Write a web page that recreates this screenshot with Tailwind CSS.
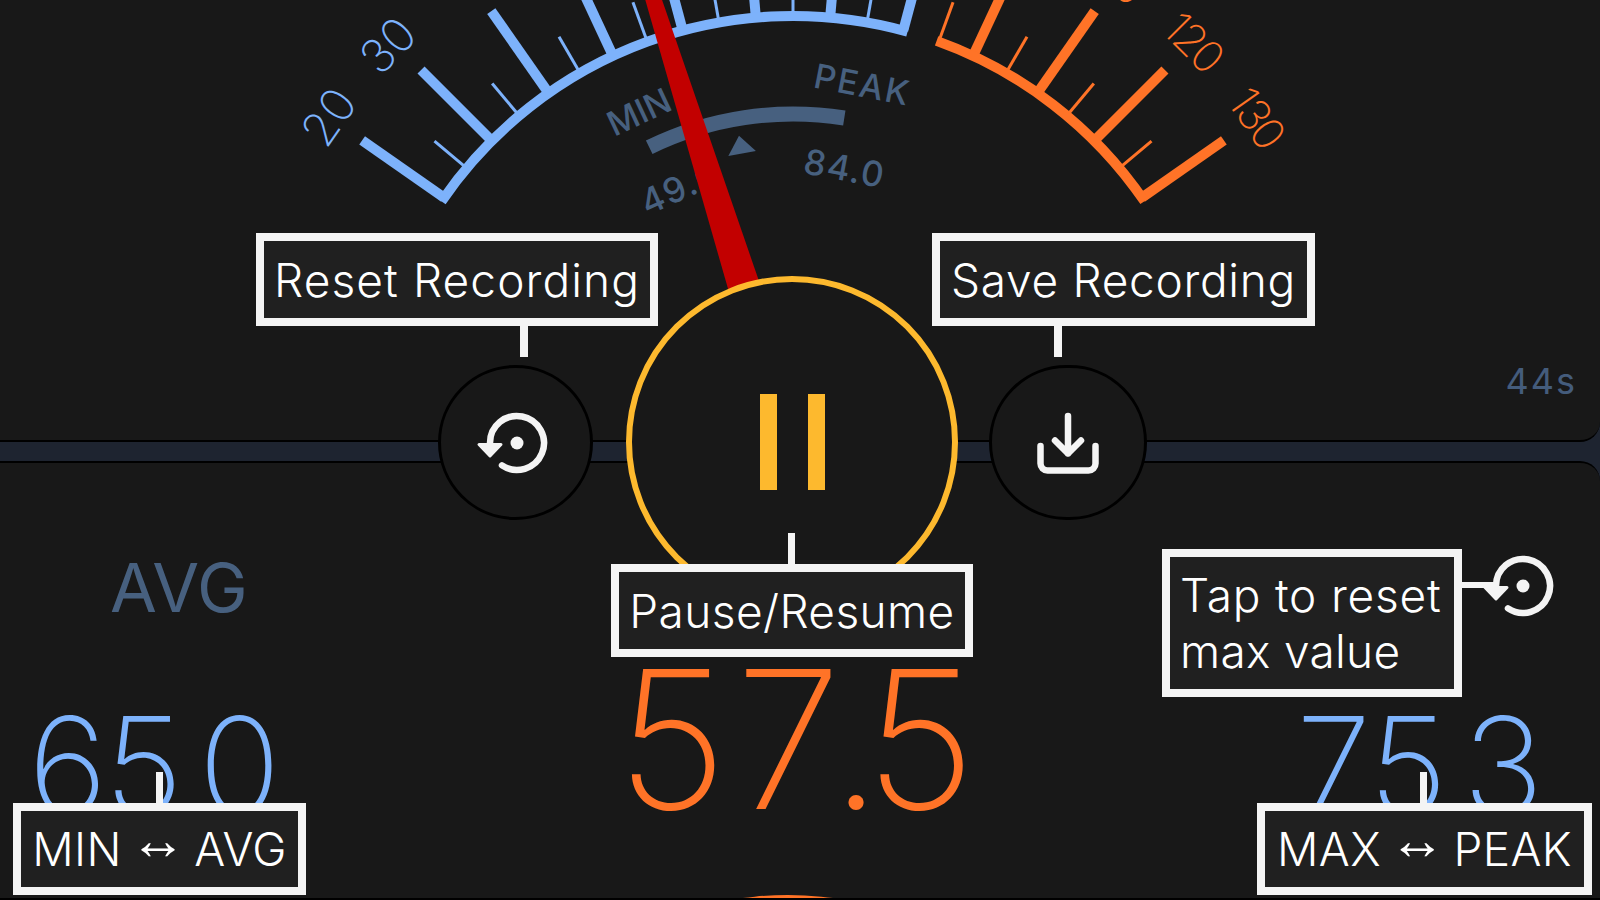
<!DOCTYPE html>
<html>
<head>
<meta charset="utf-8">
<script src="https://cdn.jsdelivr.net/npm/@tailwindcss/browser@4"></script>
</head>
<body class="bg-[#1e2430]">
<div class="relative w-[1600px] h-[900px] overflow-hidden flex flex-col bg-[#1e2430] [font-family:Inter,sans-serif]">

  <!-- upper panel: gauge -->
  <section class="relative h-[442px] shrink-0 bg-[#181818] border-b-2 border-black rounded-br-[20px]">
    <svg class="block overflow-hidden" width="1600" height="440" viewBox="0 0 1600 440" fill="none">
      <!-- blue ticks -->
      <g stroke="#7db2fb" stroke-width="10">
        <line x1="793" y1="16" x2="793" y2="-84" transform="rotate(-55 793 442)"/>
        <line x1="793" y1="16" x2="793" y2="-84" transform="rotate(-45 793 442)"/>
        <line x1="793" y1="16" x2="793" y2="-84" transform="rotate(-35 793 442)"/>
        <line x1="793" y1="16" x2="793" y2="-84" transform="rotate(-25 793 442)"/>
        <line x1="793" y1="16" x2="793" y2="-84" transform="rotate(-15 793 442)"/>
        <line x1="793" y1="16" x2="793" y2="-84" transform="rotate(-5 793 442)"/>
        <line x1="793" y1="16" x2="793" y2="-84" transform="rotate(5 793 442)"/>
        <line x1="793" y1="16" x2="793" y2="-84" transform="rotate(15 793 442)"/>
      </g>
      <g stroke="#7db2fb" stroke-width="3">
        <line x1="793" y1="16" x2="793" y2="-26" transform="rotate(-50 793 442)"/>
        <line x1="793" y1="16" x2="793" y2="-26" transform="rotate(-40 793 442)"/>
        <line x1="793" y1="16" x2="793" y2="-26" transform="rotate(-30 793 442)"/>
        <line x1="793" y1="16" x2="793" y2="-26" transform="rotate(-20 793 442)"/>
        <line x1="793" y1="16" x2="793" y2="-26" transform="rotate(-10 793 442)"/>
        <line x1="793" y1="16" x2="793" y2="-26" transform="rotate(0 793 442)"/>
        <line x1="793" y1="16" x2="793" y2="-26" transform="rotate(10 793 442)"/>
      </g>
      <path d="M441.5 201.3 A426 426 0 0 1 907.6 31.7" stroke="#7db2fb" stroke-width="10"/>
      <!-- orange ticks -->
      <g stroke="#ff7327" stroke-width="10">
        <line x1="793" y1="16" x2="793" y2="-84" transform="rotate(25 793 442)"/>
        <line x1="793" y1="16" x2="793" y2="-84" transform="rotate(35 793 442)"/>
        <line x1="793" y1="16" x2="793" y2="-84" transform="rotate(45 793 442)"/>
        <line x1="793" y1="16" x2="793" y2="-84" transform="rotate(55 793 442)"/>
      </g>
      <g stroke="#ff7327" stroke-width="3">
        <line x1="793" y1="16" x2="793" y2="-26" transform="rotate(20 793 442)"/>
        <line x1="793" y1="16" x2="793" y2="-26" transform="rotate(30 793 442)"/>
        <line x1="793" y1="16" x2="793" y2="-26" transform="rotate(40 793 442)"/>
        <line x1="793" y1="16" x2="793" y2="-26" transform="rotate(50 793 442)"/>
      </g>
      <path d="M936.6 40.9 A426 426 0 0 1 1144.5 201.3" stroke="#ff7327" stroke-width="10"/>
      <!-- scale labels -->
      <g class="font-extralight text-[47px]" text-anchor="middle">
        <text x="793" y="-108" fill="#7db2fb" transform="rotate(-55 793 442)">20</text>
        <text x="793" y="-108" fill="#7db2fb" transform="rotate(-45.6 793 442)">30</text>
        <text x="793" y="-108" fill="#7db2fb" transform="rotate(-35 793 442)">40</text>
        <text x="793" y="-108" fill="#ff7327" class="text-[44px]" letter-spacing="-3" transform="rotate(35 793 442)">110</text>
        <text x="793" y="-108" fill="#ff7327" class="text-[44px]" letter-spacing="-3" transform="rotate(45 793 442)">120</text>
        <text x="793" y="-108" fill="#ff7327" class="text-[44px]" letter-spacing="-3" transform="rotate(55 793 442)">130</text>
      </g>
      <!-- min / peak mini gauge -->
      <path d="M649.2 147.2 A328 328 0 0 1 844.3 118" stroke="#47607f" stroke-width="15"/>
      <polygon points="793,131 807,149 779,149" fill="#47607f" transform="rotate(-10 793 442)"/>
      <g fill="#47607f" class="text-[34px] font-medium" text-anchor="middle">
        <text x="793" y="90" transform="rotate(-25 793 442)">MIN</text>
        <text x="793" y="90" letter-spacing="2" transform="rotate(11 793 442)">PEAK</text>
        <text x="793" y="176" class="text-[35px]" letter-spacing="1.5" transform="rotate(-24 793 442)">49.0</text>
        <text x="793" y="176" class="text-[35px]" letter-spacing="1.5" transform="rotate(10.7 793 442)">84.0</text>
      </g>
      <!-- needle -->
      <polygon points="777,280 809,280 800.5,-40 785.5,-40" fill="#c20000" transform="rotate(-17.5 793 442)"/>
    </svg>
    <span class="absolute right-[23px] top-[361px] text-[36px] leading-[40px] tracking-[2px] text-[#445c7c]">44s</span>
  </section>

  <!-- band -->
  <div class="h-[19px] shrink-0"></div>

  <!-- lower panel: readings -->
  <section class="relative flex-1 bg-[#181818] border-t-2 border-b-2 border-t-black border-b-black rounded-tr-[20px] overflow-hidden flex font-extralight">
    <div class="w-[310px] shrink-0 pl-[28px]">
      <div class="font-normal text-[68px] leading-[68px] text-[#47607f] pl-[82px] mt-[90px]">AVG</div>
      <div class="text-[136px] leading-[136px] tracking-[-7.5px] text-[#7db2fb] mt-[77px]"><span class="tracking-[-3px]">6</span>5.0</div>
    </div>
    <div class="flex-1 flex justify-center pr-[8px]">
      <div class="text-[192px] leading-[192px] text-[#ff7327] mt-[180px]"><span class="tracking-[8px]">5</span><span class="tracking-[-12px]">7</span><span class="tracking-[-18px]">.</span>5</div>
    </div>
    <div class="w-[310px] shrink-0 pl-[6px]">
      <div class="text-[136px] leading-[136px] tracking-[-7.5px] text-[#7db2fb] mt-[235px]"><span class="tracking-[-2.5px]">7</span>5.3</div>
    </div>
    <div class="absolute left-[448px] bottom-[-677px] w-[680px] h-[680px] rounded-full bg-[#ff7327]"></div>
  </section>

  <!-- transport buttons, over the band -->
  <div class="absolute left-[438px] top-[276px] h-[332px] flex items-center gap-x-[33px]">
    <button class="w-[155px] h-[155px] rounded-full bg-[#181818] border-[3px] border-black box-border flex items-center justify-center">
      <svg width="155" height="155" viewBox="0 0 155 155" fill="none" class="shrink-0">
        <path d="M52 78 A27 27 0 1 1 64 100.4" stroke="#f4f4f4" stroke-width="6.5" stroke-linecap="round"/>
        <polygon points="41,79.5 63,79.5 52,91" fill="#f4f4f4" stroke="#f4f4f4" stroke-width="3" stroke-linejoin="round"/>
        <circle cx="79" cy="78" r="6.5" fill="#f4f4f4"/>
      </svg>
    </button>
    <button class="w-[332px] h-[332px] rounded-full bg-[#181818] border-[6px] border-[#fdb92e] box-border flex items-center justify-center gap-x-[31px]">
      <span class="w-[17px] h-[96px] bg-[#fdb92e]"></span>
      <span class="w-[17px] h-[96px] bg-[#fdb92e]"></span>
    </button>
    <button class="-ml-[2px] w-[158px] h-[155px] rounded-full bg-[#181818] border-[3px] border-black box-border flex items-center justify-center">
      <svg width="156" height="155" viewBox="0 0 156 155" fill="none" class="shrink-0">
        <path d="M78 51 V88.5 M65 75.5 L78 88.5 L91 75.5" stroke="#f4f4f4" stroke-width="6.5" stroke-linecap="round" stroke-linejoin="round"/>
        <path d="M50.5 81 V98.5 a7 7 0 0 0 7 7 H98.5 a7 7 0 0 0 7-7 V81" stroke="#f4f4f4" stroke-width="6.5" stroke-linecap="round"/>
      </svg>
    </button>
  </div>

  <!-- annotation callouts -->
  <div class="absolute left-[256px] top-[233px] w-[402px] h-[93px] bg-[#202020] border-[8px] border-[#f4f4f4] flex items-center justify-center text-white text-[46px] leading-none font-[350] tracking-[1.1px]">Reset Recording</div>
  <div class="absolute left-[520px] top-[326px] w-[8px] h-[31px] bg-[#f4f4f4]"></div>

  <div class="absolute left-[932px] top-[233px] w-[383px] h-[93px] bg-[#202020] border-[8px] border-[#f4f4f4] flex items-center justify-center text-white text-[46px] leading-none font-[350] tracking-[0.7px]">Save Recording</div>
  <div class="absolute left-[1054px] top-[326px] w-[8px] h-[31px] bg-[#f4f4f4]"></div>

  <div class="absolute left-[611px] top-[564px] w-[362px] h-[93px] bg-[#202020] border-[8px] border-[#f4f4f4] flex items-center justify-center text-white text-[46px] leading-none font-[350] tracking-[0.4px]">Pause/Resume</div>
  <div class="absolute left-[788px] top-[533px] w-[7px] h-[31px] bg-[#f4f4f4]"></div>

  <div class="absolute left-[1162px] top-[549px] w-[300px] h-[148px] bg-[#202020] border-[8px] border-[#f4f4f4] pl-[10px] flex flex-col justify-center text-white text-[46px] leading-[56px] font-[350]"><span class="tracking-[0.8px]">Tap to reset</span><span class="tracking-[0.3px]">max value</span></div>
  <div class="absolute left-[1462px] top-[582px] w-[32px] h-[6px] bg-[#f4f4f4]"></div>
  <svg class="absolute left-[1483px] top-[546px]" width="80" height="80" viewBox="39 38 80 80" fill="none">
    <path d="M52 78 A27 27 0 1 1 64 100.4" stroke="#f4f4f4" stroke-width="6.5" stroke-linecap="round"/>
    <polygon points="41,79.5 63,79.5 52,91" fill="#f4f4f4" stroke="#f4f4f4" stroke-width="3" stroke-linejoin="round"/>
    <circle cx="79" cy="78" r="6.5" fill="#f4f4f4"/>
  </svg>

  <div class="absolute left-[13px] top-[803px] w-[293px] h-[92px] bg-[#202020] border-[8px] border-[#f4f4f4] flex items-center justify-center gap-x-[8px] text-white text-[46px] leading-none font-[350] tracking-[0.4px]"><span>MIN</span><span class="[font-family:'Liberation_Sans',sans-serif] text-[56px] -translate-y-[9px]">↔</span><span>AVG</span></div>
  <div class="absolute left-[156px] top-[772px] w-[7px] h-[31px] bg-[#f4f4f4]"></div>

  <div class="absolute left-[1257px] top-[803px] w-[335px] h-[92px] bg-[#202020] border-[8px] border-[#f4f4f4] flex items-center justify-center gap-x-[8px] text-white text-[46px] leading-none font-[350] tracking-[0.4px]"><span>MAX</span><span class="[font-family:'Liberation_Sans',sans-serif] text-[56px] -translate-y-[9px]">↔</span><span>PEAK</span></div>
  <div class="absolute left-[1420px] top-[772px] w-[7px] h-[31px] bg-[#f4f4f4]"></div>
</div>
</body>
</html>
